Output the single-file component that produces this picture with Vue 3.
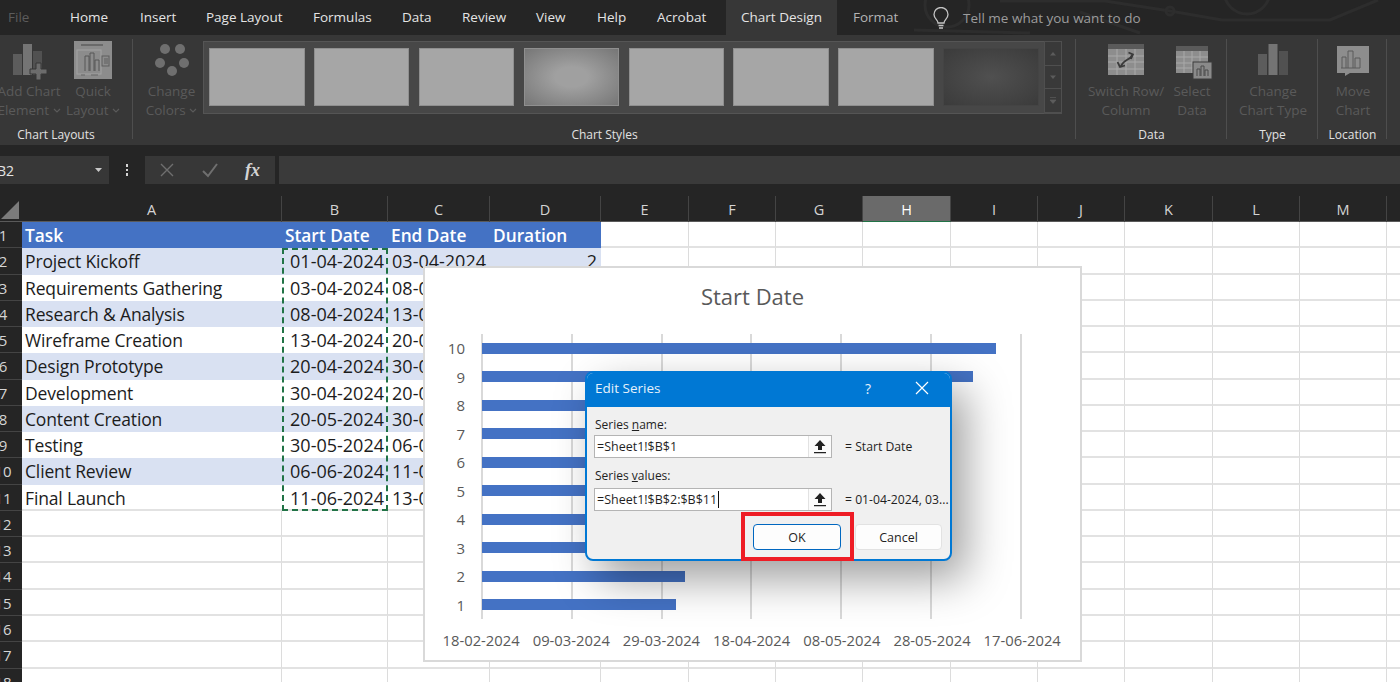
<template>
  <div class="app">
    <!-- tabs -->
    <div class="tabs">
      <svg class="circuit" width="500" height="35" viewBox="0 0 500 35" fill="none" stroke="#2d2d2d" stroke-width="3">
        <circle cx="47" cy="5" r="22" />
        <path d="M14 30 L130 33 M100 1 H205 L270 11 L322 20 H430 L478 0" />
        <circle cx="270" cy="11" r="4" />
        <circle cx="347" cy="-9" r="23" />
        <path d="M240 33 L180 12" />
      </svg>
      <span class="tab file">File</span>
      <span v-for="t in tabs" :key="t.name" class="tab" :style="{ width: t.w + 'px' }">{{ t.name }}</span>
      <span class="tab active">Chart Design</span>
      <span class="tab format">Format</span>
      <svg class="bulb" width="18" height="24" viewBox="0 0 18 24" fill="none" stroke="#c4c4c4" stroke-width="1.3">
        <path d="M6 16 C6 13 2 11.500 2 7.500 A7 7 0 0 1 16 7.500 C16 11.500 12 13 12 16 Z" />
        <path d="M6.500 18.500 H11.500 M7 21 H11" />
      </svg>
      <span class="tell">Tell me what you want to do</span>
    </div>

    <!-- ribbon -->
    <div class="ribbon">
      <div class="group g-layouts">
        <div class="group-body">
          <div class="rbtn" style="width: 58px">
            <svg class="ico" viewBox="0 0 44 43">
              <rect x="6" y="15" width="9" height="21" fill="#5c5c5c" />
              <rect x="16" y="5" width="9" height="31" fill="#747474" />
              <rect x="26" y="12" width="9" height="24" fill="#515151" />
              <path d="M29 24 h5 v6 h6 v5 h-6 v6 h-5 v-6 h-6 v-5 h6 Z" fill="#6c6c6c" stroke="#373737" />
            </svg>
            <span>Add Chart</span>
            <span>Element <svg class="chev" viewBox="0 0 8 5"><path d="M1 1 L4 4 L7 1" /></svg></span>
          </div>
          <div class="rbtn quick" style="width: 58px">
            <svg class="ico" viewBox="0 0 44 43" fill="none">
              <rect x="3" y="2" width="38" height="38" fill="#8c8c8c" />
              <path d="M10 6 H32" stroke="#5e5e5e" stroke-width="1.500" />
              <rect x="6" y="11" width="24" height="24" stroke="#a3a3a3" />
              <path d="M14 32 V17 h4 V32 M19 32 V14 h4 V32 M24 32 V21 h4 V32" stroke="#575757" />
              <path d="M10 36 H14 M20 36 H27" stroke="#666" />
              <rect x="31" y="17" width="7" height="10" stroke="#5e5e5e" />
              <path d="M33 20 H37 M33 22 H37 M33 24 H37" stroke="#5e5e5e" />
            </svg>
            <span>Quick</span>
            <span>Layout <svg class="chev" viewBox="0 0 8 5"><path d="M1 1 L4 4 L7 1" /></svg></span>
          </div>
        </div>
        <div class="group-label shifted">Chart Layouts</div>
      </div>

      <div class="group g-styles">
        <div class="group-body">
          <div class="rbtn" style="width: 63px">
            <svg class="ico" viewBox="0 0 44 43" fill="#6f6f6f">
              <circle cx="15" cy="10" r="5" />
              <circle cx="30" cy="10" r="5" />
              <circle cx="10" cy="24" r="5" />
              <circle cx="34" cy="24" r="5" />
              <circle cx="22" cy="32" r="5" />
            </svg>
            <span>Change</span>
            <span>Colors <svg class="chev" viewBox="0 0 8 5"><path d="M1 1 L4 4 L7 1" /></svg></span>
          </div>
          <div class="gallery">
            <div class="thumbs">
              <div v-for="n in 8" :key="n" class="thumb" :class="{ soft: n === 4, dark: n === 8 }"></div>
            </div>
            <div class="gallery-scroll">
              <div><svg width="8" height="5" viewBox="0 0 8 5"><path d="M1 4.500 L4 1 L7 4.500 Z" fill="#5c5c5c" /></svg></div>
              <div><svg width="8" height="5" viewBox="0 0 8 5"><path d="M1 .5 L4 4 L7 .5 Z" fill="#5c5c5c" /></svg></div>
              <div><svg width="8" height="7" viewBox="0 0 8 7"><path d="M1 0.500 H7 M1 3 L4 6.500 L7 3 Z" fill="#5c5c5c" stroke="#5c5c5c" stroke-width=".7" /></svg></div>
            </div>
          </div>
        </div>
        <div class="group-label">Chart Styles</div>
      </div>

      <div class="group g-data">
        <div class="group-body">
          <div class="rbtn" style="width: 98px">
            <svg class="ico" viewBox="0 0 44 43" fill="none">
              <rect x="4" y="5" width="36" height="31" fill="#8d8d8d" />
              <rect x="4" y="5" width="36" height="5" fill="#5a5a5a" />
              <path d="M4 17 H40 M4 23 H40 M4 30 H40 M13 10 V36 M22 10 V36 M31 10 V36" stroke="#a9a9a9" />
              <path d="M28 16 C27 21 20 20 17 27 M24.500 13.500 L29 15.500 L27 20 M13.500 23 L16 28 L21 26.500" stroke="#3a3a3a" stroke-width="1.700" />
            </svg>
            <span>Switch Row/</span>
            <span>Column</span>
          </div>
          <div class="rbtn" style="width: 34px; margin-left: 0">
            <svg class="ico" viewBox="0 0 44 43" fill="none">
              <rect x="6" y="7" width="32" height="27" fill="#8d8d8d" />
              <rect x="6" y="7" width="32" height="5" fill="#5a5a5a" />
              <path d="M6 18 H38 M6 24 H38 M6 29 H38 M14 12 V34 M22 12 V34 M30 12 V34" stroke="#a9a9a9" />
              <rect x="23" y="23" width="19" height="17" fill="#8a8a8a" stroke="#3d3d3d" />
              <path d="M27 37 V30 h3 V37 M31 37 V27 h3 V37 M35 37 V31 h3 V37" stroke="#4a4a4a" />
            </svg>
            <span>Select</span>
            <span>Data</span>
          </div>
        </div>
        <div class="group-label">Data</div>
      </div>

      <div class="group g-type">
        <div class="group-body">
          <div class="rbtn" style="width: 90px">
            <svg class="ico" viewBox="0 0 44 43">
              <rect x="7" y="15" width="9" height="21" fill="#5c5c5c" />
              <rect x="17.500" y="5" width="9" height="31" fill="#747474" />
              <rect x="28" y="12" width="9" height="24" fill="#515151" />
            </svg>
            <span>Change</span>
            <span>Chart Type</span>
          </div>
        </div>
        <div class="group-label">Type</div>
      </div>

      <div class="group g-location">
        <div class="group-body">
          <div class="rbtn" style="width: 68px">
            <svg class="ico" viewBox="0 0 44 43" fill="none">
              <path d="M6 7 H38 V34 H19 L14 37 V34 H6 Z" fill="#8d8d8d" />
              <path d="M11 29 V18 h4 V29 M17 29 V12 h5 V29 M24 29 V19 h5 V29 H10" stroke="#5a5a5a" />
            </svg>
            <span>Move</span>
            <span>Chart</span>
          </div>
        </div>
        <div class="group-label">Location</div>
      </div>
    </div>

    <!-- formula bar -->
    <div class="formula">
      <div class="namebox">
        <span class="name-text">B2</span>
        <svg width="7" height="4" viewBox="0 0 7 4"><path d="M0 0 H7 L3.500 4 Z" fill="#c8c8c8" /></svg>
      </div>
      <div class="dots"><i></i><i></i><i></i></div>
      <div class="fx-box">
        <svg width="16" height="16" viewBox="0 0 16 16" fill="none" stroke="#6f6f6f" stroke-width="1.400"><path d="M2 2 L14 14 M14 2 L2 14" /></svg>
        <svg width="18" height="16" viewBox="0 0 18 16" fill="none" stroke="#6f6f6f" stroke-width="2"><path d="M2 9 L7 14 L16 2" /></svg>
        <span class="fx">fx</span>
      </div>
      <div class="fx-input"></div>
    </div>

    <!-- sheet -->
    <div class="sheet">
      <div class="row head-row">
        <div class="corner">
          <svg width="20" height="20" viewBox="0 0 20 20"><path d="M19 1 V19 H1 Z" fill="#7b7b7b" /></svg>
        </div>
        <div v-for="c in cols" :key="c" class="col-head" :class="{ selected: c === 'H' }">{{ c }}</div>
      </div>

      <div v-for="(r, i) in rows" :key="i" class="row">
        <div class="row-head"><span>{{ i + 1 }}</span></div>
        <div
          v-for="(c, j) in cols"
          :key="c"
          class="cell"
          :class="{
            header: i === 0 && j < 4,
            band: i > 0 && i % 2 === 1 && i < 11 && j < 4,
            plain: i > 0 && i % 2 === 0 && i < 11 && j < 4,
            right: i > 0 && j > 0 && j < 4,
            task: i > 0 && j === 0
          }"
        >{{ r[j] }}</div>
      </div>

      <div class="marquee"></div>

      <!-- chart -->
      <div class="chart">
        <div class="chart-title">Start Date</div>
        <div class="plot">
          <div class="gridlines"><i v-for="n in 7" :key="n"></i></div>
          <div class="bars">
            <div v-for="b in bars" :key="b.label" class="bar-row">
              <span class="bar-label">{{ b.label }}</span>
              <div class="bar" :style="{ width: b.width + 'px' }"></div>
            </div>
          </div>
        </div>
        <div class="axis">
          <span v-for="d in axis" :key="d">{{ d }}</span>
        </div>
      </div>

      <!-- dialog -->
      <div class="dialog">
        <div class="dialog-title">
          <span class="dialog-name">Edit Series</span>
          <span class="dialog-help">?</span>
          <svg width="14" height="14" viewBox="0 0 14 14" fill="none" stroke="#fff" stroke-width="1.200"><path d="M1 1 L13 13 M13 1 L1 13" /></svg>
        </div>
        <div class="dialog-body">
          <label>Series <u>n</u>ame:</label>
          <div class="field-row">
            <div class="field">
              <span class="field-text">=Sheet1!$B$1</span>
              <div class="picker">
                <svg width="14" height="15" viewBox="0 0 14 15"><path d="M7 1 L12.500 7 H9 V11 H5 V7 H1.500 Z M1 13 H13 V14.300 H1 Z" fill="#222" /></svg>
              </div>
            </div>
            <span class="field-value">= Start Date</span>
          </div>
          <label class="second">Series <u>v</u>alues:</label>
          <div class="field-row">
            <div class="field">
              <span class="field-text">=Sheet1!$B$2:$B$11<i class="caret"></i></span>
              <div class="picker">
                <svg width="14" height="15" viewBox="0 0 14 15"><path d="M7 1 L12.500 7 H9 V11 H5 V7 H1.500 Z M1 13 H13 V14.300 H1 Z" fill="#222" /></svg>
              </div>
            </div>
            <span class="field-value">= 01-04-2024, 03...</span>
          </div>
          <div class="dialog-buttons">
            <button class="ok">OK</button>
            <button class="cancel">Cancel</button>
          </div>
        </div>
        <div class="highlight"></div>
      </div>
    </div>
  </div>
</template>

<script setup>
const tabs = [
  { name: 'Home', w: 70 },
  { name: 'Insert', w: 66 },
  { name: 'Page Layout', w: 107 },
  { name: 'Formulas', w: 89 },
  { name: 'Data', w: 60 },
  { name: 'Review', w: 74 },
  { name: 'View', w: 61 },
  { name: 'Help', w: 60 },
  { name: 'Acrobat', w: 69 }
]

const cols = ['A', 'B', 'C', 'D', 'E', 'F', 'G', 'H', 'I', 'J', 'K', 'L', 'M', '']

const table = [
  ['Task', 'Start Date', 'End Date', 'Duration'],
  ['Project Kickoff', '01-04-2024', '03-04-2024', 2],
  ['Requirements Gathering', '03-04-2024', '08-04-2024', 5],
  ['Research & Analysis', '08-04-2024', '13-04-2024', 5],
  ['Wireframe Creation', '13-04-2024', '20-04-2024', 7],
  ['Design Prototype', '20-04-2024', '30-04-2024', 10],
  ['Development', '30-04-2024', '20-05-2024', 20],
  ['Content Creation', '20-05-2024', '30-05-2024', 10],
  ['Testing', '30-05-2024', '06-06-2024', 7],
  ['Client Review', '06-06-2024', '11-06-2024', 5],
  ['Final Launch', '11-06-2024', '13-06-2024', 2]
]

const rows = Array.from({ length: 18 }, (_, i) => table[i] || [])

// x axis runs 18-02 to 17-06, 541px for 120 days
const days = [114, 109, 102, 92, 72, 62, 55, 50, 45, 43]
const bars = days.map((d, i) => ({ label: 10 - i, width: (d / 120) * 541 }))

const axis = ['18-02-2024', '09-03-2024', '29-03-2024', '18-04-2024', '08-05-2024', '28-05-2024', '17-06-2024']
</script>

<style>
html, body {
  margin: 0;
  background: #252525;
  overflow: hidden;
}
</style>

<style scoped>
.app {
  width: 1400px;
  height: 682px;
  overflow: hidden;
  background: #252525;
  font-family: "Open Sans", "Liberation Sans", sans-serif;
}

/* tabs */
.tabs {
  position: relative;
  height: 35px;
  display: flex;
  align-items: center;
  color: #e4e4e4;
  font-size: 13.5px;
}
.circuit {
  position: absolute;
  left: 900px;
  top: 0;
}
.tab {
  position: relative;
  line-height: 35px;
  white-space: nowrap;
}
.file {
  width: 70px;
  padding-left: 8px;
  box-sizing: border-box;
  color: #5c5c5c;
}
.active {
  width: 111px;
  text-align: center;
  background: #373737;
}
.format {
  color: #b4b4b4;
  width: 98px;
  padding-left: 16px;
  box-sizing: border-box;
}
.bulb {
  position: relative;
  top: 1px;
  margin-left: -3px;
}
.tell {
  position: relative;
  margin-left: 13px;
  color: #9c9c9c;
}

/* ribbon */
.ribbon {
  height: 110px;
  background: #373737;
  display: flex;
  padding-top: 4px;
  box-sizing: border-box;
}
.group {
  height: 100px;
  box-sizing: border-box;
  border-right: 1px solid #4e4e4e;
  display: flex;
  flex-direction: column;
  margin-right: 1px;
}
.g-layouts { width: 133px; }
.g-styles { width: 942px; }
.g-data { width: 150px; }
.g-type { width: 90px; }
.g-location { width: 68px; }
.group-body {
  height: 88px;
  display: flex;
}
.g-styles .group-body { padding-left: 6px; }
.quick { margin-left: 6px; }
.group-label {
  height: 12px;
  line-height: 16px;
  text-align: center;
  font-size: 12px;
  color: #e2e2e2;
  white-space: nowrap;
}
/* the group starts left of the window, so its label sits left of centre */
.shifted {
  padding-right: 20px;
}
.rbtn {
  display: flex;
  flex-direction: column;
  align-items: center;
  flex: none;
  font-size: 13.5px;
  line-height: 19px;
  color: #5a5a5a;
  white-space: nowrap;
}
.ico {
  width: 44px;
  height: 43px;
  flex: none;
}
.chev {
  width: 8px;
  height: 5px;
  fill: none;
  stroke: #5a5a5a;
  stroke-width: 1.2;
  vertical-align: 2px;
}
.gallery {
  display: flex;
  margin-top: 2px;
  width: 859px;
  height: 73px;
  box-sizing: border-box;
  background: #474747;
  border: 1px solid #555;
}
.thumbs {
  flex: 1;
  display: flex;
  gap: 9.4px;
  padding: 6px 5px;
}
.thumb {
  flex: none;
  width: 95.500px;
  height: 58px;
  box-sizing: border-box;
  background: #a6a6a6;
  border: 1px solid #8f8f8f;
}
.soft {
  background: radial-gradient(ellipse at center, #a0a0a0 25%, #767676 100%);
}
.dark {
  background: radial-gradient(ellipse at center, #505050, #3b3b3b 100%);
  border-color: #444;
}
.gallery-scroll {
  width: 17px;
  margin: -1px -1px -1px 0;
  display: flex;
  flex-direction: column;
  border: 1px solid #4f4f4f;
  background: #393939;
}
.gallery-scroll div {
  flex: 1;
  display: flex;
  align-items: center;
  justify-content: center;
  border-bottom: 1px solid #4f4f4f;
}

/* formula bar */
.formula {
  height: 51px;
  padding: 11px 0 12px;
  box-sizing: border-box;
  display: flex;
}
.namebox {
  width: 109px;
  background: #373737;
  box-sizing: border-box;
  display: flex;
  align-items: center;
  justify-content: space-between;
  padding-right: 7px;
  overflow: hidden;
  color: #e4e4e4;
  font-size: 14px;
}
.name-text {
  margin-left: -3px;
}
.dots {
  width: 36px;
  display: flex;
  flex-direction: column;
  align-items: center;
  justify-content: center;
  gap: 2px;
}
.dots i {
  width: 2.500px;
  height: 2.500px;
  background: #d4d4d4;
}
.fx-box {
  width: 130px;
  background: #373737;
  display: flex;
  align-items: center;
  gap: 26px;
  padding-left: 14px;
  box-sizing: border-box;
}
.fx {
  font-family: "Liberation Serif", serif;
  font-style: italic;
  font-weight: 700;
  font-size: 18px;
  color: #d4d4d4;
}
.fx-input {
  flex: 1;
  margin-left: 4px;
  background: #3a3a3a;
}

/* sheet */
.sheet {
  position: relative;
  height: 486px;
  overflow: hidden;
}
.row {
  display: grid;
  grid-template-columns: 22px 260px 106px 102px 111px 88px 87px 87px 88px 87px 87px 88px 87px 87px 14px;
  height: 26.270px;
  background: #fff;
}
.head-row {
  height: 26px;
  background: #252525;
  border-bottom: 1px solid #5a5a5a;
  box-sizing: border-box;
}
.corner {
  padding-top: 4px;
  line-height: 0;
}
.col-head {
  text-align: center;
  font-size: 14.500px;
  line-height: 27px;
  color: #d4d4d4;
  border-right: 1px solid #444;
  box-sizing: border-box;
}
.selected {
  background: #6a6a6a;
  color: #fff;
  border-bottom: 1px solid #217346;
  height: 26px;
}
.row-head {
  background: #252525;
  color: #d4d4d4;
  font-size: 15px;
  line-height: 27px;
  border-bottom: 1px solid #444;
  box-sizing: border-box;
  overflow: hidden;
  position: relative;
}
.row-head span {
  display: block;
  width: 36px;
  margin-left: -15px;
  text-align: center;
}
.cell {
  box-sizing: border-box;
  border-right: 1px solid #dcdcdc;
  border-bottom: 2px solid #e2e2e2;
  font-size: 18px;
  line-height: 27px;
  padding: 0 3px;
  color: #1c1c1c;
  white-space: nowrap;
  overflow: hidden;
}
.task {
  font-size: 17.500px;
  letter-spacing: -0.15px;
}
.header {
  background: #4472c4;
  color: #fff;
  font-weight: 600;
  border: none;
  padding: 0 4px 0 3px;
  font-size: 17.300px;
}
.band {
  background: #d9e1f2;
  border: none;
}
.plain {
  background: #fff;
  border-right: none;
  border-bottom: none;
}
.row:nth-child(12) .plain {
  border-bottom: 2px solid #e2e2e2;
}
.right {
  text-align: right;
  padding-right: 4px;
}

.marquee {
  position: absolute;
  left: 282px;
  top: 52px;
  width: 106px;
  height: 263px;
  box-sizing: border-box;
  border: 2px dashed #217346;
  pointer-events: none;
}

/* chart */
.chart {
  position: absolute;
  left: 423px;
  top: 70px;
  width: 659px;
  height: 396px;
  box-sizing: border-box;
  background: #fff;
  border: 2px solid #d9d9d9;
  padding-top: 13px;
}
.chart-title {
  text-align: center;
  font-size: 22px;
  line-height: 30px;
  color: #595959;
  margin-bottom: 23px;
}
.plot {
  position: relative;
  margin-left: 56px;
  width: 541px;
  height: 285px;
}
.gridlines {
  position: absolute;
  inset: 0;
  display: flex;
  justify-content: space-between;
}
.gridlines i {
  width: 2px;
  background: #d9d9d9;
}
.bars {
  position: relative;
  display: flex;
  flex-direction: column;
  margin-left: -34px;
}
.bar-row {
  height: 28.500px;
  display: flex;
  align-items: center;
}
.bar-label {
  width: 18px;
  margin-right: 17px;
  text-align: right;
  font-size: 15px;
  color: #595959;
}
.bar {
  height: 11px;
  background: #4472c4;
}
.axis {
  display: flex;
  margin: 11px 0 0 11px;
}
.axis span {
  width: 90.200px;
  flex: none;
  text-align: center;
  font-size: 14.800px;
  line-height: 20px;
  color: #595959;
  white-space: nowrap;
}

/* dialog */
.dialog {
  position: absolute;
  left: 585px;
  top: 175px;
  width: 367px;
  height: 190px;
  box-sizing: border-box;
  border: 2px solid #0078d4;
  border-radius: 8px;
  background: #f0f0f0;
  box-shadow: 14px 18px 44px rgba(0, 0, 0, 0.38);
}
.dialog-title {
  height: 34px;
  background: #0078d4;
  border-radius: 6px 6px 0 0;
  display: flex;
  align-items: center;
  padding: 0 21px 4px 8px;
  box-sizing: border-box;
  color: #e6f1fb;
  font-size: 13.500px;
}
.dialog-name {
  flex: 1;
}
.dialog-help {
  margin-right: 44px;
  font-size: 14px;
}
.dialog-body {
  padding-left: 7px;
  font-size: 12px;
  color: #1f1f1f;
}
.dialog-body label {
  display: block;
  height: 28px;
  line-height: 36px;
  padding-left: 1px;
}
.dialog-body label.second {
  height: 30px;
  line-height: 35px;
}
.field-row {
  display: flex;
  align-items: center;
}
.field {
  width: 238px;
  height: 23px;
  box-sizing: border-box;
  border: 1px solid #b4b4b4;
  background: #fff;
  display: flex;
  align-items: center;
  justify-content: space-between;
}
.field-text {
  padding-left: 2px;
  font-size: 12.500px;
  display: flex;
  align-items: center;
}
.caret {
  width: 1px;
  height: 17px;
  background: #111;
  margin-left: 1px;
}
.picker {
  width: 22px;
  height: 21px;
  background: #fbfbfb;
  border-left: 1px solid #e2e2e2;
  display: flex;
  align-items: center;
  justify-content: center;
}
.field-value {
  margin-left: 13px;
  white-space: nowrap;
  overflow: hidden;
  width: 105px;
  font-size: 12.200px;
}
.dialog-buttons {
  display: flex;
  justify-content: flex-end;
  gap: 14px;
  padding-right: 8px;
  margin-top: 13px;
}
.dialog-buttons button {
  height: 26px;
  font-family: inherit;
  font-size: 12.500px;
  color: #1f1f1f;
  background: #fdfdfd;
  border-radius: 4px;
  padding: 0;
}
.ok {
  width: 88px;
  border: 1.500px solid #0067c0;
}
.cancel {
  width: 87px;
  border: 1px solid #e2e2e2;
}
.highlight {
  position: absolute;
  left: 154px;
  top: 139px;
  width: 113px;
  height: 49px;
  box-sizing: border-box;
  border: 4px solid #ee1c25;
}
</style>
